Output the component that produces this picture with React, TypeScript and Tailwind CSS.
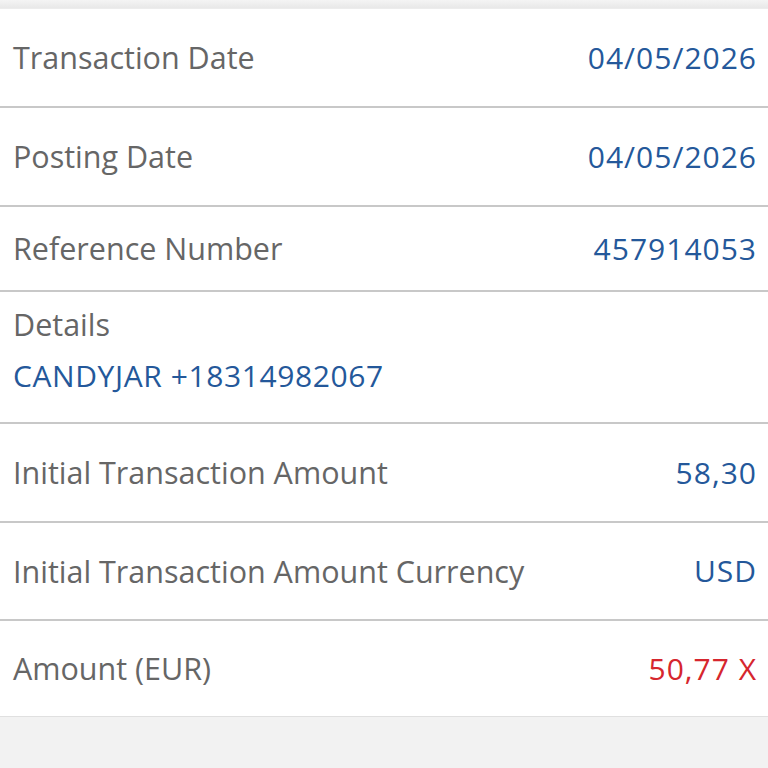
import React from "react";

const font = { fontFamily: '"Open Sans", "Noto Sans", sans-serif' };

function Row({ label, value, h, red }: { label: string; value: string; h: string; red?: boolean }) {
  return (
    <div className={`flex items-center justify-between pl-[13px] pr-[11px] border-b-2 border-[#c8c8c8] ${h}`}>
      <span className="text-[30.5px] text-[#666666] leading-none">{label}</span>
      <span className={`text-[30px] tracking-[1px] leading-none ${red ? "text-[#d6262e]" : "text-[#24589a]"}`}>{value}</span>
    </div>
  );
}

export default function App() {
  return (
    <div className="w-[768px] h-[768px] bg-[#f2f2f2] overflow-hidden" style={font}>
      <div className="h-[9px] bg-gradient-to-b from-[#f4f4f4] to-[#e8e8e8] border-b border-[#ececec]" />
      <div className="bg-white border-b border-[#e0e0e0]">
        <Row label="Transaction Date" value="04/05/2026" h="h-[99px]" />
        <Row label="Posting Date" value="04/05/2026" h="h-[99px]" />
        <Row label="Reference Number" value="457914053" h="h-[85px]" />
        <div className="flex flex-col justify-start pt-[17px] pl-[13px] pr-[11px] border-b-2 border-[#c8c8c8] h-[132px] gap-[21px]">
          <span className="text-[30.5px] text-[#666666] leading-none">Details</span>
          <span className="text-[30px] tracking-[0.6px] text-[#24589a] leading-none">CANDYJAR +18314982067</span>
        </div>
        <Row label="Initial Transaction Amount" value="58,30" h="h-[99px]" />
        <Row label="Initial Transaction Amount Currency" value="USD" h="h-[98px]" />
        <div className="flex items-center justify-between pl-[13px] pr-[11px] h-[95px]">
          <span className="text-[30.5px] text-[#666666] leading-none">Amount (EUR)</span>
          <span className="text-[30px] tracking-[1px] leading-none text-[#d6262e]">50,77 X</span>
        </div>
      </div>
    </div>
  );
}
